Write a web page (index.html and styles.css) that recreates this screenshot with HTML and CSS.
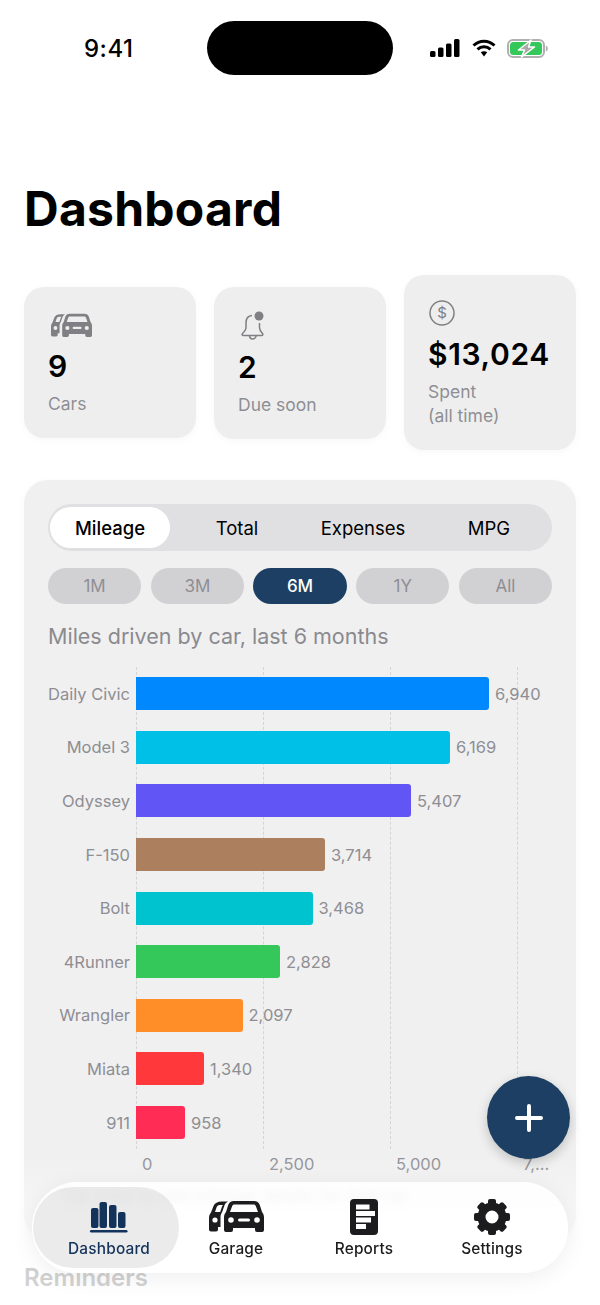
FILE: index.html
```html
<!DOCTYPE html>
<html lang="en">
<head>
<meta charset="utf-8">
<title>Dashboard</title>
<link rel="stylesheet" href="styles.css">
</head>
<body>
<div class="screen">
  <header class="status">
    <span class="status-time">9:41</span>
    <span class="island"></span>
    <span class="status-icons">
      <svg class="ico-signal" viewBox="0 0 30 18"><rect x="0" y="12" width="5.500" height="6" rx="1.500"/><rect x="8" y="8.500" width="5.500" height="9.500" rx="1.500"/><rect x="16" y="4.500" width="5.500" height="13.500" rx="1.500"/><rect x="24" y="0" width="5.500" height="18" rx="1.500"/></svg>
      <svg class="ico-wifi" viewBox="0 0 24 18"><path d="M1.500 6.500C7.500.8 16.500.8 22.500 6.500" class="wifi-arc"/><path d="M5.500 10.300C9.200 6.800 14.800 6.800 18.500 10.300" class="wifi-arc"/><path d="M8.800 13.300c1.900-1.300 4.500-1.300 6.400 0L12 17.500z"/></svg>
      <svg class="ico-battery" viewBox="0 0 41 19"><rect x="1" y="1" width="36" height="17" rx="5" class="batt-shell"/><rect x="3" y="3" width="32" height="13" rx="3.500" class="batt-fill"/><path d="M38.800 6.500c1.400.5 2 1.500 2 3s-.6 2.500-2 3z" class="batt-tip"/><path d="M24 1 11.500 11h6l-3 7L27.500 8h-6z" class="batt-bolt"/></svg>
    </span>
  </header>

  <h1 class="title">Dashboard</h1>

  <section class="stats">
    <article class="stat">
      <svg class="stat-icon stat-icon--car" viewBox="0 0 55 32"><use href="#car"/></svg>
      <div class="stat-value">9</div>
      <div class="stat-label">Cars</div>
    </article>
    <article class="stat stat--bell">
      <svg class="stat-icon stat-icon--bell" viewBox="0 0 26 29"><path d="M12 4.500C8 4.800 6 7.800 6 12v4.500c0 2.500-1.500 4-3.500 6-.8.8-.4 2 .8 2h18.400c1.200 0 1.600-1.200.8-2-2-2-3-3.500-3-6V12" class="bell-line"/><path d="M9.500 24.800c.3 2 1.700 3.200 3.300 3.200s3-1.200 3.300-3.200" class="bell-line"/><circle cx="19" cy="5" r="4.500" class="bell-dot"/></svg>
      <div class="stat-value">2</div>
      <div class="stat-label">Due soon</div>
    </article>
    <article class="stat">
      <svg class="stat-icon stat-icon--dollar" viewBox="0 0 28 28"><circle cx="14" cy="14" r="12" class="bell-line"/><text x="14" y="19" class="dollar-text">$</text></svg>
      <div class="stat-value stat-value--money">$13,024</div>
      <div class="stat-label">Spent<br>(all time)</div>
    </article>
  </section>

  <section class="chart-card">
    <div class="segments">
      <span class="segment segment--on">Mileage</span>
      <span class="segment">Total</span>
      <span class="segment">Expenses</span>
      <span class="segment">MPG</span>
    </div>
    <div class="ranges">
      <span class="range">1M</span>
      <span class="range">3M</span>
      <span class="range range--on">6M</span>
      <span class="range">1Y</span>
      <span class="range">All</span>
    </div>
    <p class="chart-title">Miles driven by car, last 6 months</p>

    <div class="plot">
      <div class="grid-lines"><i></i><i></i><i></i><i></i></div>
      <div class="row"><span class="row-name">Daily Civic</span><span class="bar" style="width:353px;background:#0088ff"></span><span class="row-val">6,940</span></div>
      <div class="row"><span class="row-name">Model 3</span><span class="bar" style="width:314px;background:#00c0e8"></span><span class="row-val">6,169</span></div>
      <div class="row"><span class="row-name">Odyssey</span><span class="bar" style="width:275px;background:#6155f5"></span><span class="row-val">5,407</span></div>
      <div class="row"><span class="row-name">F-150</span><span class="bar" style="width:189px;background:#ac7f5e"></span><span class="row-val">3,714</span></div>
      <div class="row"><span class="row-name">Bolt</span><span class="bar" style="width:176.500px;background:#00c3d0"></span><span class="row-val">3,468</span></div>
      <div class="row"><span class="row-name">4Runner</span><span class="bar" style="width:144px;background:#34c759"></span><span class="row-val">2,828</span></div>
      <div class="row"><span class="row-name">Wrangler</span><span class="bar" style="width:106.500px;background:#ff8d28"></span><span class="row-val">2,097</span></div>
      <div class="row"><span class="row-name">Miata</span><span class="bar" style="width:68px;background:#ff383c"></span><span class="row-val">1,340</span></div>
      <div class="row"><span class="row-name">911</span><span class="bar" style="width:49px;background:#ff2d55"></span><span class="row-val">958</span></div>
    </div>
    <div class="axis">
      <span class="tick">0</span>
      <span class="tick">2,500</span>
      <span class="tick">5,000</span>
      <span class="tick">7,...</span>
    </div>
    <p class="chart-note">Tap a bar to see mileage details for that car</p>
  </section>

  <h2 class="section-title">Reminders</h2>

  <div class="fade"></div>

  <button class="fab" type="button" aria-label="Add">
    <svg viewBox="0 0 28 28"><path d="M14 2v24M2 14h24"/></svg>
  </button>

  <nav class="tabbar">
    <a class="tab tab--on">
      <svg class="tab-icon tab-icon--bars" viewBox="0 0 36 30"><rect x="1" y="6" width="7.500" height="20" rx="2"/><rect x="9.500" y="0" width="7.500" height="26" rx="2"/><rect x="19" y="3" width="7.500" height="23" rx="2"/><rect x="28" y="10" width="7.500" height="16" rx="2"/><rect x="0" y="28" width="37.500" height="2.500" rx="1.250"/></svg>
      <span>Dashboard</span>
    </a>
    <a class="tab">
      <svg class="tab-icon tab-icon--car" viewBox="0 0 55 32"><use href="#car"/></svg>
      <span>Garage</span>
    </a>
    <a class="tab">
      <svg class="tab-icon tab-icon--doc" viewBox="0 0 28 36"><path fill-rule="evenodd" d="M4 0h20a4 4 0 0 1 4 4v28a4 4 0 0 1-4 4H4a4 4 0 0 1-4-4V4a4 4 0 0 1 4-4zM6 5.500v5h13.500v-5zM6 12v5h19v-5zM6 18.500v5h15v-5zM6 25v5h10v-5z"/></svg>
      <span>Reports</span>
    </a>
    <a class="tab">
      <svg class="tab-icon tab-icon--gear" viewBox="0 0 36 36">
        <circle cx="18" cy="18" r="10.500" class="gear-ring"/>
        <g class="gear-teeth">
          <rect x="14" y="0" width="8" height="8" rx="2"/>
          <rect x="14" y="0" width="8" height="8" rx="2" transform="rotate(45 18 18)"/>
          <rect x="14" y="0" width="8" height="8" rx="2" transform="rotate(90 18 18)"/>
          <rect x="14" y="0" width="8" height="8" rx="2" transform="rotate(135 18 18)"/>
          <rect x="14" y="0" width="8" height="8" rx="2" transform="rotate(180 18 18)"/>
          <rect x="14" y="0" width="8" height="8" rx="2" transform="rotate(225 18 18)"/>
          <rect x="14" y="0" width="8" height="8" rx="2" transform="rotate(270 18 18)"/>
          <rect x="14" y="0" width="8" height="8" rx="2" transform="rotate(315 18 18)"/>
        </g>
      </svg>
      <span>Settings</span>
    </a>
  </nav>

  <svg class="defs" width="0" height="0" aria-hidden="true">
    <symbol id="car" viewBox="0 0 55 32">
      <path fill-rule="evenodd" d="M25 1h20c3 0 4.800 1.500 5.800 4l2.200 7c1.300 1.500 2 3.300 2 5.500V30a2 2 0 0 1-2 2h-5a2 2 0 0 1-2-2v-2H24v2a2 2 0 0 1-2 2h-5a2 2 0 0 1-2-2V17.500c0-2.200.7-4 2-5.500L19.200 5c1-2.500 2.800-4 5.800-4zM25.500 4.500c-1.200 0-2 .6-2.400 1.700L21 12h28l-2.100-5.800C46.500 5.100 45.700 4.500 44.500 4.500zM22 17.200a2.800 2.800 0 1 0 0 5.600 2.800 2.800 0 0 0 0-5.600zM48 17.200a2.800 2.800 0 1 0 0 5.600 2.800 2.800 0 0 0 0-5.600zM30.500 18.500a1.500 1.500 0 0 0 0 3h9a1.500 1.500 0 0 0 0-3z"/>
      <path fill-rule="evenodd" d="M13 1.500h6c-1.500.8-2.800 2-3.500 3.700l-2.300 6.800c-1.300 1.800-1.700 3.500-1.700 5.500V27H9v2.500a2 2 0 0 1-2 2H2a2 2 0 0 1-2-2V18c0-2.200.7-4 2-5.500L4.500 6C5.700 3 8.500 1.500 13 1.500zM10.500 5c-1.500.3-2.400 1-3 2.500L6 12h5.200L13 6.500c.3-.6.7-1.100 1-1.500zM6 17.400a2.600 2.600 0 1 0 0 5.200 2.600 2.600 0 0 0 0-5.200z"/>
    </symbol>
  </svg>
</div>
</body>
</html>
```

FILE: styles.css
```css
* { box-sizing: border-box; }

html, body {
  margin: 0;
  padding: 0;
  background: #fff;
}

body {
  font-family: Inter, "Liberation Sans", sans-serif;
  color: #000;
}

.screen {
  position: relative;
  width: 600px;
  height: 1305px;
  overflow: hidden;
  padding: 21px 24px 0;
  background: #fff;
}

/* status bar */
.status {
  display: flex;
  align-items: center;
  height: 54px;
  padding-left: 60px;
}
.status-time {
  width: 123px;
  font-size: 24px;
  font-weight: 500;
  letter-spacing: 0.5px;
}
.island {
  width: 186px;
  height: 54px;
  border-radius: 27px;
  background: #000;
}
.status-icons {
  display: flex;
  align-items: center;
  margin-left: 37px;
  gap: 11.500px;
}
.ico-signal { width: 30px; height: 18px; fill: #000; }
.ico-wifi { width: 24px; height: 18px; fill: #000; }
.wifi-arc { fill: none; stroke: #000; stroke-width: 3; }
.ico-battery { width: 41px; height: 19px; }
.batt-shell { fill: #fff; stroke: #b0b0b0; stroke-width: 2; }
.batt-fill { fill: #34c759; }
.batt-tip { fill: #b0b0b0; }
.batt-bolt { fill: #a9a9a9; stroke: #fff; stroke-width: 1.500; stroke-linejoin: round; }

/* title */
.title {
  margin: 105px 0 37px;
  font-size: 48px;
  line-height: 58px;
  font-weight: 700;
  letter-spacing: 0.25px;
}

/* stat cards */
.stats {
  display: flex;
  align-items: center;
  gap: 18px;
}
.stat {
  flex: 1 1 0;
  padding: 24px 24px 22px;
  border-radius: 20px;
  background: #eeeeef;
  box-shadow: 0 2px 8px rgba(0, 0, 0, 0.03);
}
.stat-icon {
  display: block;
  height: 28px;
  margin-bottom: 9px;
}
.stat-icon--car { width: 41px; height: 24px; margin: 2px 0 11px 3px; fill: #808084; }
.stat-icon--bell { width: 26px; height: 29px; margin-left: 2px; }
.stat-icon--dollar { width: 28px; }
.bell-line { fill: none; stroke: #808084; stroke-width: 1.500; }
.bell-dot { fill: #808084; }
.dollar-text {
  font-family: Inter, "Liberation Sans", sans-serif;
  font-size: 15px;
  text-anchor: middle;
  fill: #808084;
}
.stat-value {
  font-size: 30px;
  line-height: 36px;
  font-weight: 600;
}
.stat-value--money { letter-spacing: 0.65px; white-space: nowrap; }
.stat-label {
  margin-top: 8px;
  font-size: 17.500px;
  line-height: 24px;
  color: #8e8e93;
}

/* chart card */
.chart-card {
  margin-top: 30px;
  padding: 24px;
  height: 760px;
  border-radius: 24px;
  background: #f0f0f1;
  box-shadow: 0 2px 10px rgba(0, 0, 0, 0.03);
}
.segments {
  display: grid;
  grid-template-columns: repeat(4, 1fr);
  height: 47px;
  padding: 3px 0;
  border-radius: 24px;
  background: #e0e0e2;
  align-items: stretch;
}
.segment {
  display: flex;
  align-items: center;
  justify-content: center;
  font-size: 18.500px;
  font-weight: 400;
}
.segment--on {
  margin-left: 2px;
  margin-right: 4px;
  border-radius: 21px;
  background: #fff;
  font-weight: 500;
}
.ranges {
  display: flex;
  gap: 9.500px;
  margin-top: 17px;
}
.range {
  flex: 1 1 0;
  display: flex;
  align-items: center;
  justify-content: center;
  height: 36px;
  border-radius: 18px;
  background: #d1d1d3;
  color: #8e8e93;
  font-size: 17px;
}
.range--on {
  background: #1c3f63;
  color: #fff;
  font-weight: 500;
}
.chart-title {
  margin: 19px 0 0;
  font-size: 21.500px;
  line-height: 26px;
  color: #8a8a8e;
}

/* plot */
.plot {
  position: relative;
  margin-top: 18px;
}
.grid-lines {
  position: absolute;
  inset: 0 0 0 88px;
}
.grid-lines i {
  position: absolute;
  top: 0;
  bottom: 0;
  border-left: 1px dashed #d4d4d6;
}
.grid-lines i:nth-child(1) { left: 0; }
.grid-lines i:nth-child(2) { left: 127px; }
.grid-lines i:nth-child(3) { left: 254px; }
.grid-lines i:nth-child(4) { left: 381px; }
.row {
  position: relative;
  display: flex;
  align-items: center;
  height: 53.600px;
}
.row-name {
  flex: none;
  width: 84px;
  margin: 0 6px 0 -2px;
  text-align: right;
  font-size: 16.500px;
  color: #8e8e93;
  white-space: nowrap;
}
.bar {
  height: 33px;
  border-radius: 0 3px 3px 0;
}
.row-val {
  margin-left: 6px;
  font-size: 16.500px;
  color: #8e8e93;
}
.axis {
  display: flex;
  height: 30px;
  margin-left: 88px;
  align-items: center;
}
.tick {
  flex: none;
  width: 127px;
  padding-left: 6px;
  font-size: 16.500px;
  color: #8e8e93;
}
.chart-note {
  margin: 6px 0 0 12px;
  font-size: 17px;
  line-height: 22px;
  color: #333336;
  white-space: nowrap;
}

/* reminders heading */
.section-title {
  margin: 0;
  position: relative;
  top: 24px;
  font-size: 24px;
  line-height: 28px;
  font-weight: 600;
  color: #2c2c2e;
}

/* bottom fade */
.fade {
  position: absolute;
  left: 0;
  right: 0;
  bottom: 0;
  height: 150px;
  background: linear-gradient(rgba(255, 255, 255, 0) 0%, rgba(255, 255, 255, 0.76) 60%, rgba(255, 255, 255, 0.8) 100%);
  pointer-events: none;
}

/* floating button */
.fab {
  position: absolute;
  left: 487px;
  top: 1076px;
  width: 83px;
  height: 83px;
  padding: 0;
  border: 0;
  border-radius: 50%;
  background: #1c3f63;
  box-shadow: 0 4px 12px rgba(0, 0, 0, 0.2);
  display: flex;
  align-items: center;
  justify-content: center;
}
.fab svg {
  width: 28px;
  height: 28px;
  fill: none;
  stroke: #fff;
  stroke-width: 4;
  stroke-linecap: round;
}

/* tab bar */
.tabbar {
  position: absolute;
  left: 32px;
  top: 1182px;
  width: 536px;
  height: 91px;
  padding: 5px 12px;
  display: grid;
  grid-template-columns: repeat(4, 1fr);
  border-radius: 46px;
  background: rgba(255, 255, 255, 0.9);
  -webkit-backdrop-filter: blur(4px);
  backdrop-filter: blur(4px);
  box-shadow: 0 4px 24px rgba(0, 0, 0, 0.07);
}
.tab {
  position: relative;
  display: flex;
  flex-direction: column;
  align-items: center;
  padding-top: 13px;
  font-size: 15.400px;
  letter-spacing: 0.2px;
  font-weight: 500;
  line-height: 18px;
  color: #1c1c1e;
}
.tab span {
  position: absolute;
  top: 53px;
}
.tab--on {
  margin: 0 -7px 0 -11px;
  padding-left: 4px;
  border-radius: 40px;
  background: rgba(0, 0, 0, 0.08);
  color: #14335a;
  font-weight: 500;
}
.tab--on span { left: 35px; }
.tab-icon {
  display: block;
  overflow: visible;
}
.tab-icon--bars { width: 36px; height: 30px; margin-top: 2px; fill: #14335a; }
.tab-icon--car { width: 55px; height: 32px; fill: #1c1c1e; }
.tab-icon--doc { width: 28px; height: 36px; fill: #1c1c1e; margin-top: -1px; }
.tab-icon--gear { width: 36px; height: 36px; margin-top: -1px; }
.gear-ring { fill: none; stroke: #1c1c1e; stroke-width: 8; }
.gear-teeth { fill: #1c1c1e; }
.defs { position: absolute; }
```
